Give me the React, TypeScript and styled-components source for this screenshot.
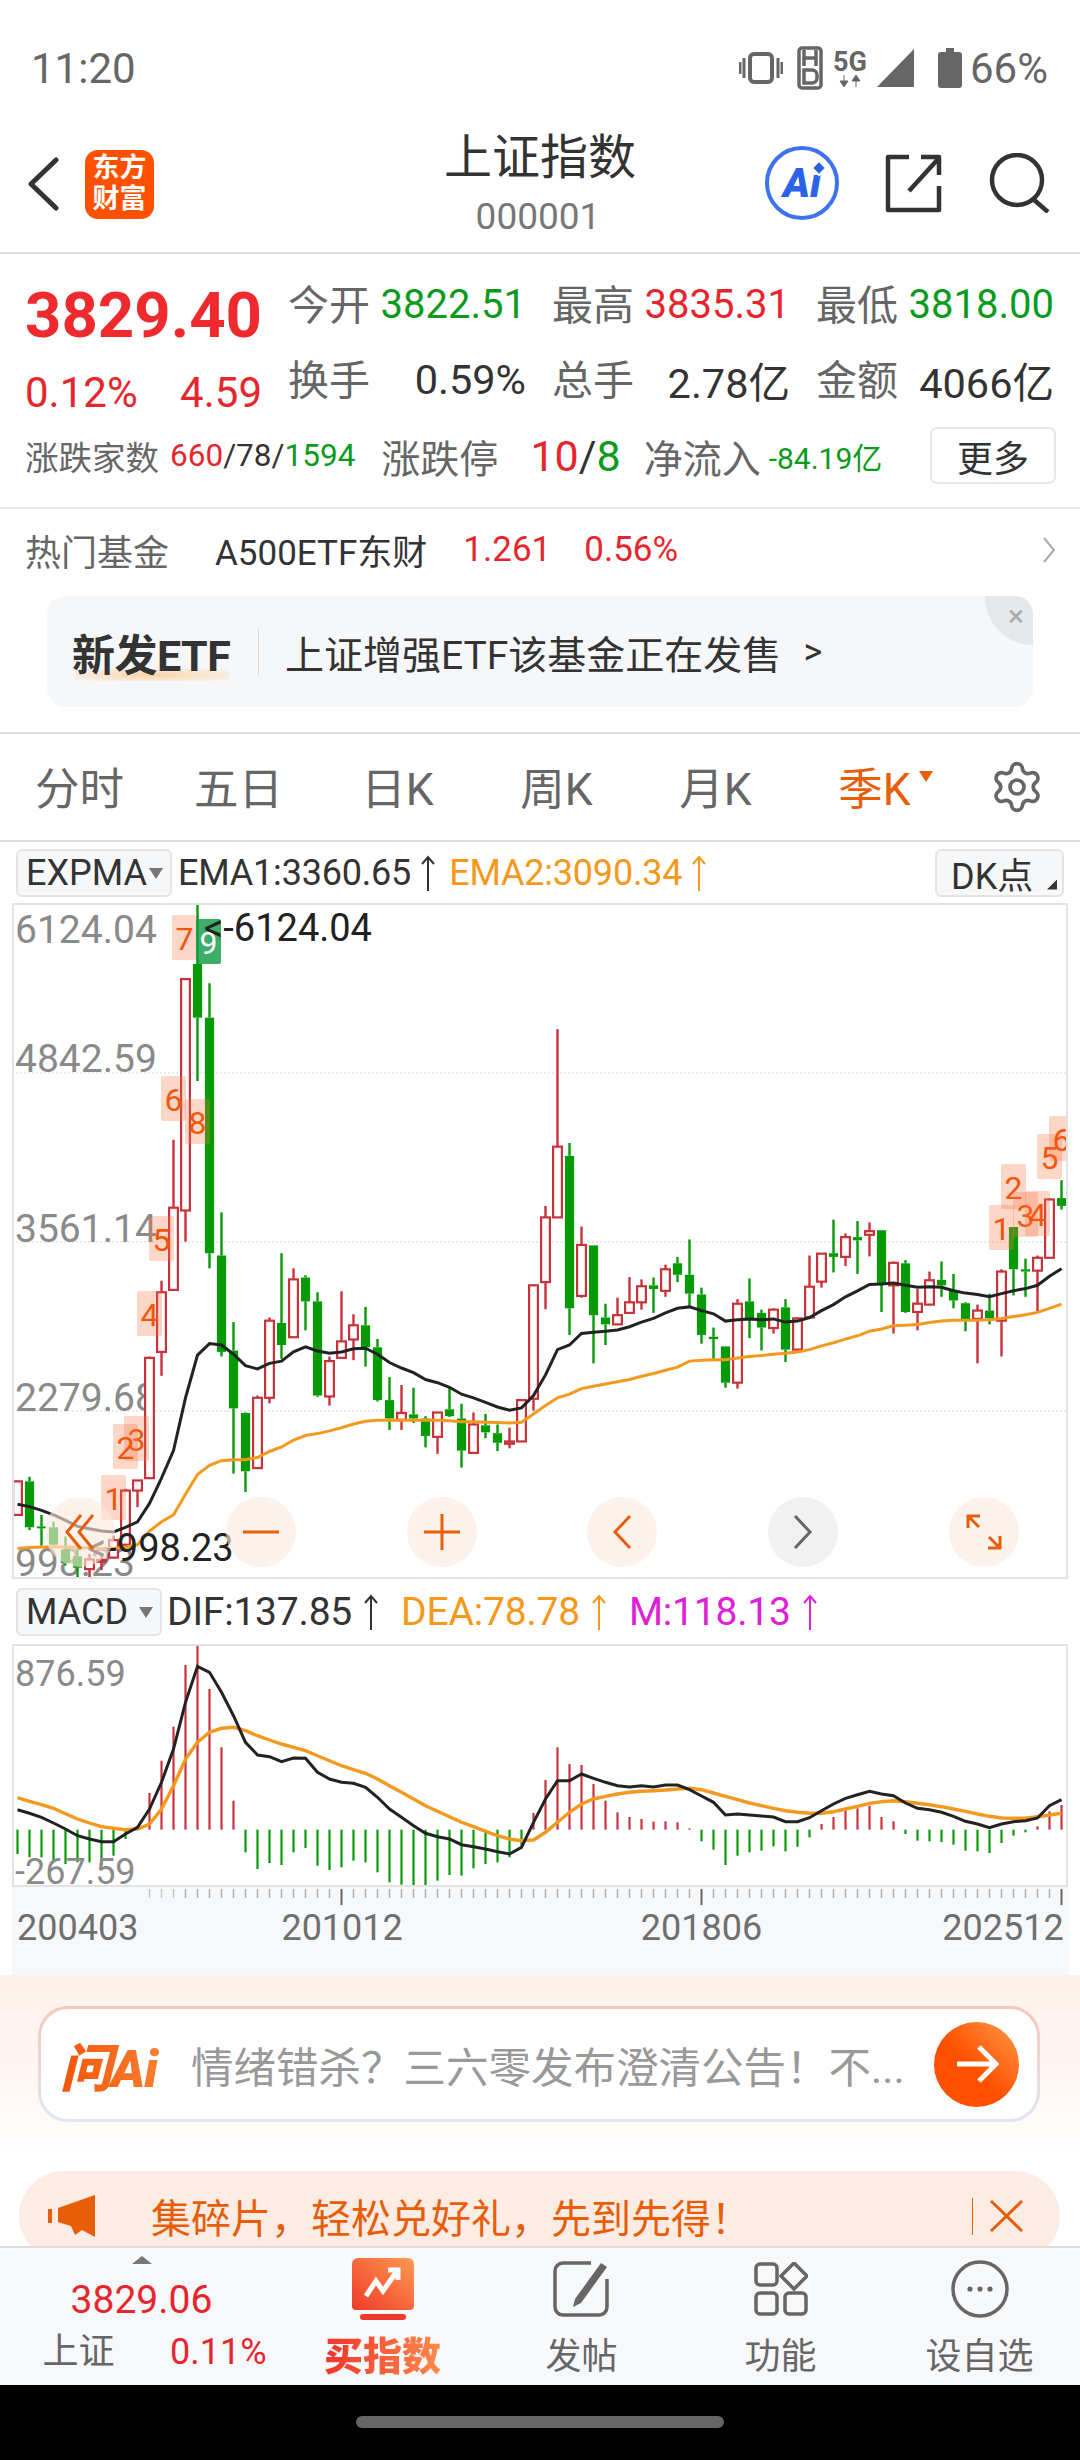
import React from 'react';
import styled, { createGlobalStyle } from 'styled-components';
import { Settings } from 'lucide-react';

const RED = '#e6262d';
const GREEN = '#0a9a1c';
const ORANGE = '#e85d08';
const AMBER = '#f5981c';

const GlobalStyle = createGlobalStyle`
  html, body {
    margin: 0;
    padding: 0;
    background: #fff;
    font-family: Roboto, "Noto Sans CJK SC", sans-serif;
  }
`;

const Page = styled.div`
  width: 1080px;
  height: 2460px;
  overflow: hidden;
  display: flex;
  flex-direction: column;
  color: #333;
`;

/* status bar */
const StatusBar = styled.div`
  height: 120px;
  box-sizing: border-box;
  padding: 16px 32px 0 31px;
  display: flex;
  align-items: center;
  justify-content: space-between;
  color: #666;
  font-size: 42px;
`;

const StatusIcons = styled.div`
  display: flex;
  align-items: center;
  gap: 8px;
`;

const NetStack = styled.div`
  display: flex;
  flex-direction: column;
  align-items: center;
  font-size: 27px;
  font-weight: 700;
  line-height: 26px;
  margin: 0 2px 0 2px;
`;

/* title */
const Header = styled.div`
  height: 134px;
  box-sizing: border-box;
  display: grid;
  grid-template-columns: 1fr auto 1fr;
  align-items: center;
  border-bottom: 2px solid #ddd;
`;

const HeaderLeft = styled.div`
  display: flex;
  align-items: center;
  gap: 26px;
  padding: 0 0 4px 27px;
`;

const Logo = styled.div`
  width: 69px;
  height: 69px;
  border-radius: 13px;
  background: #ff5000;
  color: #fff;
  font-size: 27px;
  font-weight: 700;
  line-height: 31px;
  text-align: center;
  display: flex;
  align-items: center;
  justify-content: center;
`;

const TitleBlock = styled.div`
  text-align: center;
`;

const Title = styled.div`
  font-size: 48px;
  line-height: 62px;
  color: #333;
  margin-top: -6px;
`;

const Code = styled.div`
  font-size: 37px;
  line-height: 44px;
  color: #777;
  margin: 6px 4px 0 0;
`;

const HeaderRight = styled.div`
  display: flex;
  align-items: center;
  justify-content: flex-end;
  gap: 46px;
  padding: 0 30px 6px 0;
`;

const AiBadge = styled.div`
  width: 74px;
  height: 74px;
  box-sizing: border-box;
  border: 4px solid #3f72f0;
  border-radius: 50%;
  display: flex;
  align-items: center;
  justify-content: center;
  color: #2a62ea;
  font-size: 41px;
  font-weight: 900;
  font-style: italic;
  font-family: Roboto, sans-serif;
  position: relative;
  &::after {
    content: '';
    position: absolute;
    left: 46px;
    top: 14px;
    width: 8px;
    height: 8px;
    background: #2a62ea;
    transform: rotate(45deg);
    box-shadow: 0 0 0 2px #fff;
  }
`;

/* quote */
const Quote = styled.div`
  height: 255px;
  box-sizing: border-box;
  padding-top: 13px;
  border-bottom: 2px solid #e9e9e9;
`;

const QuoteTop = styled.div`
  display: flex;
  height: 150px;
`;

const PriceCol = styled.div`
  width: 289px;
  box-sizing: border-box;
  padding: 17px 0 0 25px;
`;

const Price = styled.div`
  font-size: 63.5px;
  line-height: 64px;
  font-weight: 700;
  color: #ee2a2e;
`;

const PriceSub = styled.div`
  display: flex;
  justify-content: space-between;
  width: 237px;
  font-size: 42px;
  line-height: 50px;
  margin-top: 20px;
  color: ${RED};
`;

const StatGrid = styled.div`
  flex: 1;
  display: grid;
  grid-template-columns: repeat(3, 264px);
  grid-auto-rows: 75px;
`;

const Stat = styled.div`
  box-sizing: border-box;
  padding-right: 26px;
  display: flex;
  align-items: center;
  justify-content: space-between;
`;

const StatLabel = styled.span`
  font-size: 41px;
  color: #666;
  margin-bottom: 5px;
`;

const StatValue = styled.span<{ $color?: string; $size: number }>`
  font-size: ${({ $size }) => $size}px;
  color: ${({ $color }) => $color || '#333'};
`;

const BreadthRow = styled.div`
  display: flex;
  align-items: center;
  height: 57px;
  margin-top: 10px;
  padding-left: 25px;
  position: relative;
`;

const BreadthLabel = styled.span<{ $size: number; $ml?: number }>`
  font-size: ${({ $size }) => $size}px;
  color: #666;
  margin-left: ${({ $ml }) => $ml || 0}px;
  white-space: nowrap;
`;

const BreadthValue = styled.span<{ $size: number; $ml?: number }>`
  font-size: ${({ $size }) => $size}px;
  margin-left: ${({ $ml }) => $ml || 0}px;
  color: #333;
  white-space: nowrap;
`;

const Tint = styled.span<{ $color: string }>`
  color: ${({ $color }) => $color};
`;

const MoreButton = styled.div`
  position: absolute;
  left: 930px;
  top: 0;
  width: 126px;
  height: 57px;
  box-sizing: border-box;
  border: 2px solid #e8e8e8;
  border-radius: 7px;
  display: flex;
  align-items: center;
  justify-content: center;
  font-size: 36px;
  color: #333;
`;

/* fund */
const FundRow = styled.div`
  height: 87px;
  box-sizing: border-box;
  display: flex;
  align-items: center;
  padding: 0 24px 6px 25px;
  font-size: 35px;
  white-space: nowrap;
`;

const FundLabel = styled.span`
  font-size: 36px;
  color: #666;
`;

const FundName = styled.span`
  margin-left: 46px;
  color: #333;
`;

const FundNum = styled.span<{ $ml: number }>`
  margin-left: ${({ $ml }) => $ml}px;
  color: ${RED};
`;

const FundArrow = styled.svg`
  margin-left: auto;
`;

const EtfCard = styled.div`
  margin: 0 47px;
  height: 111px;
  border-radius: 18px;
  background: #f6f7f9;
  display: flex;
  align-items: center;
  padding-left: 25px;
  position: relative;
  overflow: hidden;
  white-space: nowrap;
`;

const EtfClose = styled.div`
  position: absolute;
  right: 0;
  top: 0;
  width: 48px;
  height: 49px;
  background: #e6e7e9;
  border-bottom-left-radius: 48px;
  color: #aaa;
  font-size: 30px;
  line-height: 40px;
  text-align: right;
  padding-right: 9px;
  box-sizing: border-box;
`;

const EtfTag = styled.div`
  font-size: 43px;
  font-weight: 700;
  color: #333;
  letter-spacing: -0.5px;
  position: relative;
  width: 186px;
  z-index: 0;
  &::after {
    content: '';
    position: absolute;
    left: 2px;
    bottom: 2px;
    width: 155px;
    height: 12px;
    background: radial-gradient(ellipse at center, #fbd3a4, rgba(251, 211, 164, 0));
    z-index: -1;
  }
`;

const EtfDivider = styled.div`
  width: 1px;
  height: 48px;
  background: #ddd;
`;

const EtfText = styled.div`
  margin-left: 26px;
  font-size: 39px;
  color: #333;
`;

const EtfChevron = styled.span`
  margin-left: 22px;
  font-size: 36px;
  color: #333;
`;

/* period tabs */
const Tabs = styled.div`
  margin-top: 25px;
  height: 106px;
  box-sizing: content-box;
  padding: 0;
  border-top: 2px solid #ddd;
  border-bottom: 2px solid #ddd;
  display: flex;
  align-items: center;
`;

const Tab = styled.div<{ $active?: boolean }>`
  width: 159px;
  margin-top: -4px;
  display: flex;
  justify-content: center;
  font-size: 44.5px;
  color: ${({ $active }) => ($active ? ORANGE : '#666')};
  position: relative;
`;

const TabCaret = styled.span`
  position: absolute;
  left: 124px;
  top: 18px;
  width: 0;
  height: 0;
  border-left: 7px solid transparent;
  border-right: 7px solid transparent;
  border-top: 11px solid ${ORANGE};
`;

const Gear = styled.div`
  margin-left: 35px;
  display: flex;
  color: #666;
`;

/* indicator rows */
const IndicatorRow = styled.div<{ $h: number }>`
  height: ${({ $h }) => $h}px;
  box-sizing: border-box;
  display: flex;
  align-items: center;
  padding: 0 16px;
  white-space: nowrap;
`;

const SelectBox = styled.div<{ $w: number }>`
  width: ${({ $w }) => $w}px;
  height: 48px;
  box-sizing: border-box;
  background: #f6f7f9;
  border: 2px solid #e4e4e4;
  border-radius: 6px;
  display: flex;
  align-items: center;
  padding-left: 8px;
  font-size: 36px;
  color: #333;
  position: relative;
`;

const SelectCaret = styled.span`
  position: absolute;
  right: 7px;
  top: 17px;
  width: 0;
  height: 0;
  border-left: 7px solid transparent;
  border-right: 7px solid transparent;
  border-top: 11px solid #777;
`;

const IndicatorText = styled.span<{ $color?: string; $ml: number; $size: number; $gap: number }>`
  margin-left: ${({ $ml }) => $ml}px;
  font-size: ${({ $size }) => $size}px;
  color: ${({ $color }) => $color || '#333'};
  letter-spacing: -0.2px;
  display: flex;
  align-items: center;
  gap: ${({ $gap }) => $gap}px;
`;

const DkButton = styled.div`
  margin-left: auto;
  margin-right: 0;
  width: 129px;
  height: 48px;
  box-sizing: border-box;
  background: #f6f7f9;
  border: 2px solid #e4e4e4;
  border-radius: 6px;
  font-size: 36px;
  color: #333;
  padding-left: 14px;
  display: flex;
  align-items: center;
  position: relative;
  &::after {
    content: '';
    position: absolute;
    right: 5px;
    bottom: 5px;
    width: 10px;
    height: 10px;
    background: #333;
    clip-path: polygon(100% 0, 100% 100%, 0 100%);
  }
`;

/* chart panels */
const ChartPanel = styled.div`
  margin-left: 12px;
  width: 1056px;
  height: 676px;
  box-sizing: border-box;
  position: relative;
  border: 2px solid #e2e2e2;
  overflow: hidden;
`;

const MacdPanel = styled.div`
  margin-left: 12px;
  width: 1056px;
  height: 243px;
  box-sizing: border-box;
  border: 2px solid #e2e2e2;
  overflow: hidden;
`;

const ChartSvg = styled.svg`
  display: block;
  position: absolute;
  left: -2px;
  top: -2px;
  font-family: Roboto, sans-serif;
`;

const MacdSvg = styled.svg`
  display: block;
  margin: -2px 0 0 -2px;
  font-family: Roboto, sans-serif;
`;

const ChartControls = styled.div`
  position: absolute;
  left: 31px;
  top: 592px;
  width: 974px;
  display: flex;
  justify-content: space-between;
`;

const ControlButton = styled.div<{ $muted?: boolean }>`
  width: 70px;
  height: 70px;
  border-radius: 50%;
  background: ${({ $muted }) => ($muted ? 'rgba(235,235,235,0.7)' : 'rgba(252,232,222,0.62)')};
  display: flex;
  align-items: center;
  justify-content: center;
`;

const TimeAxis = styled.div`
  margin-left: 12px;
  width: 1057px;
  height: 88px;
  background: #f7f8fa;
`;

const TimeLabels = styled.div`
  display: flex;
  font-size: 36px;
  color: #6f6f6f;
  line-height: 42px;
  margin-top: 2px;
`;

const TimeLabel = styled.span<{ $ml: number }>`
  margin-left: ${({ $ml }) => $ml}px;
`;

/* ask ai */
const AskSection = styled.div`
  height: 196px;
  box-sizing: border-box;
  padding: 31px 40px 0 38px;
  background: linear-gradient(#fff2ed, #fff5f1 50%, #fff 92%);
`;

const AskBox = styled.div`
  height: 116px;
  box-sizing: border-box;
  border: 3px solid transparent;
  border-radius: 30px;
  background: linear-gradient(#fff, #fff) padding-box, linear-gradient(#f8c6bd, #dfe6f4) border-box;
  display: flex;
  align-items: center;
  padding-left: 19px;
  white-space: nowrap;
`;

const AskLogo = styled.span`
  font-size: 52px;
  font-weight: 900;
  font-style: italic;
  width: 131px;
  letter-spacing: -1px;
  background: linear-gradient(90deg, #f0560a, #ff8a3c);
  -webkit-background-clip: text;
  background-clip: text;
  color: transparent;
`;

const AskText = styled.span`
  font-size: 42.5px;
  color: #999;
  width: 714px;
  overflow: hidden;
`;

const AskGo = styled.div`
  margin-left: 29px;
  width: 85px;
  height: 85px;
  border-radius: 50%;
  background: linear-gradient(45deg, #ff5000 45%, #ff9a4a);
  display: flex;
  align-items: center;
  justify-content: center;
`;

/* notice */
const NoticeClip = styled.div`
  height: 75px;
  overflow: hidden;
  padding: 0 20px 0 19px;
`;

const Notice = styled.div`
  height: 90px;
  border-radius: 45px;
  background: #fdece4;
  display: flex;
  align-items: center;
  padding-left: 29px;
  color: ${ORANGE};
  white-space: nowrap;
`;

const NoticeText = styled.span`
  margin-left: 56px;
  font-size: 40px;
`;

const NoticeDivider = styled.div`
  margin-left: 221px;
  width: 1px;
  height: 37px;
  background: ${ORANGE};
`;

const NoticeClose = styled.svg`
  margin-left: 17px;
`;

/* bottom tab bar */
const TabBar = styled.div`
  height: 139px;
  box-sizing: border-box;
  border-top: 2px solid #ddd;
  background: #f7f8fa;
  display: grid;
  grid-template-columns: 283px repeat(4, 199px);
`;

const IndexCell = styled.div`
  display: flex;
  flex-direction: column;
  align-items: center;
  padding-top: 8px;
`;

const IndexCaret = styled.span`
  width: 0;
  height: 0;
  border-left: 10px solid transparent;
  border-right: 10px solid transparent;
  border-bottom: 8px solid #777;
`;

const IndexPrice = styled.div`
  font-size: 39px;
  line-height: 46px;
  margin-top: 13px;
  color: ${RED};
`;

const IndexMeta = styled.div`
  width: 224px;
  margin: 6px 0 0 26px;
  display: flex;
  justify-content: space-between;
  align-items: center;
  font-size: 36px;
  line-height: 46px;
  color: #666;
`;

const IndexPct = styled.span`
  color: ${RED};
`;

const NavCell = styled.div`
  display: flex;
  flex-direction: column;
  align-items: center;
  padding-top: 10px;
`;

const NavIcon = styled.div`
  height: 62px;
  display: flex;
  align-items: center;
  justify-content: center;
`;

const NavLabel = styled.div<{ $hot?: boolean }>`
  font-size: ${({ $hot }) => ($hot ? 39 : 36)}px;
  font-weight: ${({ $hot }) => ($hot ? 900 : 400)};
  line-height: 48px;
  margin-top: 13px;
  color: #666;
  ${({ $hot }) =>
    $hot &&
    `
    background: linear-gradient(90deg, #f0352c, #ff8a4a);
    -webkit-background-clip: text;
    background-clip: text;
    color: transparent;
  `}
`;

const SystemBar = styled.div`
  flex: 1;
  background: #000;
  display: flex;
  justify-content: center;
  padding-top: 31px;
`;

const HomePill = styled.div`
  width: 368px;
  height: 12px;
  border-radius: 6px;
  background: #666;
`;

// [high, bodyTop, bodyBottom, low, up] measured off the reference, chart coordinates below convert them
type Candle = [number, number, number, number, 'r' | 'g'];

const CANDLES: Candle[] = [
  [1310, 1312, 1385, 1385, 'r'], [1302, 1312, 1412, 1418, 'g'], [1385, 1410, 1414, 1452, 'g'], [1400, 1412, 1450, 1452, 'g'],
  [1432, 1460, 1490, 1495, 'g'], [1450, 1475, 1500, 1525, 'g'], [1470, 1482, 1503, 1523, 'r'], [1475, 1483, 1487, 1505, 'r'],
  [1430, 1440, 1478, 1480, 'r'], [1328, 1332, 1450, 1455, 'r'], [1310, 1310, 1332, 1368, 'r'], [1040, 1043, 1305, 1307, 'r'],
  [875, 900, 1030, 1082, 'r'], [568, 716, 895, 895, 'r'], [218, 218, 722, 790, 'r'], [55, 185, 302, 440, 'g'],
  [227, 302, 815, 848, 'g'], [726, 820, 1030, 1040, 'g'], [965, 1027, 1153, 1295, 'g'], [1162, 1163, 1290, 1335, 'g'],
  [1125, 1130, 1283, 1283, 'r'], [955, 962, 1130, 1142, 'r'], [815, 967, 1015, 1045, 'g'], [848, 872, 998, 998, 'r'],
  [863, 868, 920, 983, 'g'], [900, 920, 1125, 1128, 'g'], [1040, 1050, 1127, 1147, 'r'], [898, 1007, 1043, 1043, 'r'],
  [948, 972, 1003, 1048, 'r'], [932, 972, 1020, 1062, 'g'], [1002, 1020, 1135, 1138, 'g'], [1085, 1135, 1175, 1200, 'g'],
  [1102, 1163, 1178, 1200, 'r'], [1108, 1166, 1175, 1185, 'g'], [1170, 1175, 1213, 1238, 'g'], [1162, 1162, 1215, 1252, 'r'],
  [1108, 1155, 1170, 1172, 'g'], [1143, 1175, 1245, 1282, 'g'], [1162, 1188, 1250, 1252, 'r'], [1165, 1190, 1205, 1218, 'g'],
  [1188, 1207, 1228, 1246, 'g'], [1195, 1225, 1230, 1240, 'r'], [1133, 1135, 1225, 1225, 'r'], [883, 885, 1132, 1158, 'r'],
  [712, 737, 878, 937, 'r'], [327, 583, 737, 737, 'r'], [575, 603, 935, 993, 'g'], [757, 797, 908, 912, 'r'],
  [798, 798, 950, 1055, 'g'], [925, 955, 970, 1015, 'g'], [912, 950, 970, 970, 'r'], [867, 922, 945, 945, 'r'],
  [872, 887, 922, 938, 'r'], [868, 885, 893, 945, 'g'], [840, 850, 897, 910, 'r'], [823, 837, 862, 878, 'g'],
  [785, 862, 903, 932, 'g'], [890, 905, 993, 1012, 'g'], [977, 997, 1002, 1050, 'g'], [1018, 1018, 1097, 1108, 'g'],
  [915, 925, 1097, 1110, 'r'], [870, 920, 957, 1000, 'g'], [938, 945, 977, 1027, 'g'], [935, 938, 978, 990, 'r'],
  [915, 933, 1025, 1052, 'g'], [955, 957, 1025, 1025, 'r'], [820, 888, 955, 955, 'r'], [815, 816, 877, 890, 'r'],
  [742, 815, 823, 857, 'g'], [772, 780, 823, 843, 'r'], [745, 780, 787, 860, 'g'], [748, 767, 775, 822, 'r'],
  [765, 765, 880, 943, 'g'], [833, 836, 885, 990, 'r'], [830, 837, 943, 945, 'g'], [893, 925, 943, 983, 'r'],
  [855, 874, 927, 928, 'r'], [833, 873, 885, 910, 'g'], [860, 895, 918, 935, 'g'], [922, 924, 960, 985, 'g'],
  [927, 940, 958, 1055, 'r'], [903, 940, 957, 970, 'g'], [850, 855, 962, 1040, 'r'], [758, 758, 850, 907, 'g'],
  [827, 850, 855, 910, 'g'], [820, 825, 853, 942, 'r'], [695, 698, 825, 825, 'r'], [656, 695, 712, 720, 'g'],
];

const EMA1 = [
  1362, 1367, 1375, 1385, 1397, 1410, 1415, 1420, 1422, 1412, 1400, 1360, 1305, 1245, 1130, 1037, 1012, 1015, 1035, 1060, 1067, 1055,
  1050, 1030, 1019, 1028, 1033, 1030, 1023, 1022, 1035, 1053, 1065, 1075, 1090, 1097, 1107, 1122, 1130, 1140, 1150, 1157, 1152, 1125,
  1080, 1025, 1015, 990, 987, 985, 982, 975, 965, 957, 945, 935, 932, 940, 947, 963, 960, 958, 960, 958, 965, 963, 955, 940, 927, 910,
  897, 883, 882, 880, 885, 889, 888, 889, 897, 902, 905, 910, 903, 897, 892, 885, 865, 849,
];

const EMA2 = [
  1458, 1456, 1455, 1455, 1455, 1456, 1457, 1458, 1458, 1455, 1450, 1420, 1400, 1385, 1340, 1297, 1277, 1267, 1265, 1265, 1260, 1247,
  1237, 1222, 1212, 1208, 1202, 1195, 1187, 1181, 1179, 1179, 1179, 1179, 1179, 1179, 1180, 1182, 1182, 1183, 1184, 1185, 1183, 1165,
  1147, 1130, 1122, 1110, 1105, 1100, 1095, 1090, 1083, 1077, 1070, 1063, 1050, 1048, 1047, 1047, 1043, 1040, 1038, 1035, 1033, 1030,
  1025, 1017, 1010, 1002, 995, 985, 980, 973, 972, 970, 966, 963, 961, 961, 961, 960, 957, 953, 949, 944, 935, 926,
];

const MARKERS: { x: number; y: number; t: string; green?: boolean }[] = [
  { x: 172, y: 916, t: '7' }, { x: 196, y: 920, t: '9', green: true }, { x: 161, y: 1077, t: '6' }, { x: 185, y: 1100, t: '8' },
  { x: 149, y: 1217, t: '5' }, { x: 137, y: 1292, t: '4' }, { x: 124, y: 1417, t: '3' }, { x: 113, y: 1425, t: '2' },
  { x: 101, y: 1476, t: '1' }, { x: 989, y: 1206, t: '1' }, { x: 1001, y: 1165, t: '2' }, { x: 1013, y: 1193, t: '3' },
  { x: 1025, y: 1192, t: '4' }, { x: 1037, y: 1135, t: '5' }, { x: 1049, y: 1117, t: '6' },
];

const AXIS_LABELS = [
  { t: '6124.04', y: 944 }, { t: '4842.59', y: 1073 }, { t: '3561.14', y: 1243 }, { t: '2279.68', y: 1412 }, { t: '998.23', y: 1577 },
];

const MACD_BARS = [
  825, 835, 835, 850, 855, 850, 850, 860, 830, 780, 752, 642, 545, 443, 258, 195, 330, 505, 665, 820, 870, 852, 858, 820, 807, 860, 873,
  865, 845, 850, 880, 910, 917, 920, 925, 905, 888, 890, 868, 855, 850, 835, 800, 702, 603, 505, 555, 558, 615, 665, 700, 714, 720, 728,
  727, 730, 748, 787, 812, 858, 830, 820, 815, 802, 817, 803, 775, 735, 714, 692, 688, 680, 714, 727, 765, 785, 787, 789, 797, 815, 817,
  822, 792, 770, 760, 742, 697, 678,
];

const DIF_LINE = [
  692, 703, 715, 732, 750, 770, 780, 788, 788, 765, 745, 690, 610, 510, 370, 262, 280, 340, 410, 490, 528, 533, 548, 537, 538, 580, 600, 610,
  613, 625, 655, 690, 715, 740, 763, 773, 780, 797, 803, 810, 818, 825, 805, 730, 660, 605, 605, 585, 598, 610, 620, 624, 620, 624, 618,
  618, 632, 651, 670, 708, 705, 708, 711, 714, 728, 728, 716, 695, 675, 658, 647, 637, 645, 650, 672, 688, 692, 700, 712, 727, 735, 746,
  735, 728, 725, 717, 680, 662,
];

const DEA_LINE = [
  656, 667, 677, 688, 704, 720, 732, 743, 748, 752, 750, 735, 690, 620, 540, 490, 460, 448, 445, 455, 470, 483, 495, 505, 515, 530, 545, 560,
  572, 583, 600, 620, 640, 660, 680, 697, 713, 730, 743, 757, 770, 780, 785, 783, 760, 730, 700, 675, 660, 652, 645, 640, 637, 635, 633,
  630, 628, 632, 642, 652, 662, 672, 680, 688, 695, 700, 703, 703, 698, 690, 682, 673, 668, 665, 668, 673, 677, 683, 690, 697, 705, 712,
  717, 718, 718, 713, 708, 703,
];

const candleX = (i: number) => 5.5 + 12 * i;
const zoomY = (z: number) => 880 + z / 2.178 - 904;
const macdY = (z: number) => z / 3 - 65;
const linePoints = (values: number[], toY: (v: number) => number) =>
  values.map((v, i) => `${candleX(i).toFixed(1)},${toY(v).toFixed(1)}`).join(' ');

const KChart: React.FC = () => (
  <ChartSvg width={1056} height={676} viewBox="0 0 1056 676">
    {[1074, 1243, 1412].map(y => (
      <line key={y} x1={0} x2={1056} y1={y - 904} y2={y - 904} stroke="#e4e4e4" strokeWidth={1.5} strokeDasharray="2 2" />
    ))}
    {AXIS_LABELS.map(l => (
      <text key={l.t} x={3} y={l.y - 904} fontSize={39} fill="#8a8a8a">
        {l.t}
      </text>
    ))}
    {CANDLES.map(([hi, top, bot, lo, c], i) => {
      const x = candleX(i);
      const color = c === 'r' ? '#c8333b' : '#069a06';
      return (
        <g key={i}>
          <line x1={x} x2={x} y1={zoomY(hi)} y2={zoomY(top)} stroke={color} strokeWidth={2.4} />
          <line x1={x} x2={x} y1={zoomY(bot)} y2={zoomY(lo)} stroke={color} strokeWidth={2.4} />
          {c === 'r' ? (
            <rect x={x - 4.4} y={zoomY(top)} width={8.8} height={Math.max(zoomY(bot) - zoomY(top), 1)} fill="#fff" stroke={color} strokeWidth={2.2} />
          ) : (
            <rect x={x - 4.6} y={zoomY(top)} width={9.2} height={Math.max(zoomY(bot) - zoomY(top), 2)} fill={color} />
          )}
        </g>
      );
    })}
    <polyline points={linePoints(EMA2, zoomY)} fill="none" stroke="#f5991e" strokeWidth={3} />
    <polyline points={linePoints(EMA1, zoomY)} fill="none" stroke="#222" strokeWidth={3} />
    {MARKERS.map((m, i) => (
      <g key={i}>
        <rect x={m.x - 12} y={m.y - 904} width={25} height={45} rx={2} fill={m.green ? 'rgba(20,155,70,0.82)' : 'rgba(246,120,70,0.3)'} />
        <text x={m.x + 0.5} y={m.y - 904 + 35} fontSize={32} textAnchor="middle" fill={m.green ? '#fff' : '#f2570c'}>
          {m.t}
        </text>
      </g>
    ))}
    <text x={192} y={38} fontSize={38} fill="#222">
      {'<-6124.04'}
    </text>
    <text x={75} y={658} fontSize={38} fill="#222">
      {'<-998.23'}
    </text>
  </ChartSvg>
);

const MacdChart: React.FC = () => (
  <MacdSvg width={1056} height={243} viewBox="0 0 1056 243">
    {MACD_BARS.map((z, i) => {
      const x = candleX(i);
      const base = macdY(752);
      return <line key={i} x1={x} x2={x} y1={base} y2={macdY(z)} stroke={z < 752 ? '#c8333b' : '#069a06'} strokeWidth={2.2} />;
    })}
    <text x={3} y={42} fontSize={36} fill="#8a8a8a">
      876.59
    </text>
    <text x={3} y={240} fontSize={36} fill="#8a8a8a">
      -267.59
    </text>
    <polyline points={linePoints(DEA_LINE, macdY)} fill="none" stroke="#f5991e" strokeWidth={3.4} />
    <polyline points={linePoints(DIF_LINE, macdY)} fill="none" stroke="#222" strokeWidth={3} />
  </MacdSvg>
);

const UpArrow: React.FC<{ color: string }> = ({ color }) => (
  <svg width={16} height={36} viewBox="0 0 16 36">
    <path d="M8 36V2M2 9L8 2l6 7" fill="none" stroke={color} strokeWidth={2} />
  </svg>
);

const TimeTicks: React.FC = () => (
  <svg width={1057} height={18} viewBox="0 0 1057 18" style={{ display: 'block' }}>
    {Array.from({ length: 77 }, (_, n) => {
      const i = n + 11;
      const major = i === 27 || i === 57 || i === 87;
      return (
        <line key={i} x1={candleX(i)} x2={candleX(i)} y1={2} y2={major ? 18 : 11} stroke={major ? '#666' : '#aaa'} strokeWidth={major ? 2 : 1.4} opacity={i < 14 ? 0.6 : 1} />
      );
    })}
  </svg>
);

const App: React.FC = () => (
  <Page>
    <GlobalStyle />
    <StatusBar>
      <span>11:20</span>
      <StatusIcons>
        <svg width={44} height={32} viewBox="0 0 44 32">
          <rect x={11} y={2} width={22} height={28} rx={4} fill="none" stroke="#666" strokeWidth={4} />
          <path d="M5 6v20M1 10v12M39 6v20M43 10v12" stroke="#666" strokeWidth={3} />
        </svg>
        <svg width={26} height={44} viewBox="0 0 26 44" style={{ marginLeft: 6 }}>
          <rect x={2} y={2} width={22} height={40} rx={3} fill="none" stroke="#666" strokeWidth={3.5} />
          <path d="M7 4v16M19 4v16M7 12h12M7 24h8a5 5 0 0 1 5 5v3a5 5 0 0 1-5 5H7z" fill="none" stroke="#666" strokeWidth={3.5} />
        </svg>
        <NetStack>
          <span>5G</span>
          <svg width={24} height={12} viewBox="0 0 24 12">
            <path d="M6 0v7M2 6h8l-4 6zM18 12V5M14 6h8l-4-6z" fill="#666" stroke="#666" strokeWidth={1} />
          </svg>
        </NetStack>
        <svg width={37} height={38} viewBox="0 0 37 38">
          <path d="M37 0v38H0z" fill="#666" />
        </svg>
        <svg width={24} height={40} viewBox="0 0 24 40" style={{ marginLeft: 16 }}>
          <path d="M8 0h8v4h5a3 3 0 0 1 3 3v30a3 3 0 0 1-3 3H3a3 3 0 0 1-3-3V7a3 3 0 0 1 3-3h5z" fill="#666" />
        </svg>
        <span>66%</span>
      </StatusIcons>
    </StatusBar>

    <Header>
      <HeaderLeft>
        <svg width={32} height={54} viewBox="0 0 32 54">
          <path d="M29 3L4 27l25 24" fill="none" stroke="#333" strokeWidth={5} strokeLinecap="round" strokeLinejoin="round" />
        </svg>
        <Logo>
          东方
          <br />
          财富
        </Logo>
      </HeaderLeft>
      <TitleBlock>
        <Title>上证指数</Title>
        <Code>000001</Code>
      </TitleBlock>
      <HeaderRight>
        <AiBadge>Ai</AiBadge>
        <svg width={57} height={59} viewBox="0 0 57 59">
          <path d="M24 3H3v53h51V32M24 37L54 4M36 3h18v18" fill="none" stroke="#333" strokeWidth={4.5} strokeLinejoin="round" />
        </svg>
        <svg width={62} height={60} viewBox="0 0 62 60">
          <circle cx={29} cy={27} r={25} fill="none" stroke="#333" strokeWidth={4.5} />
          <path d="M45 46l15 13" stroke="#333" strokeWidth={4.5} />
        </svg>
      </HeaderRight>
    </Header>

    <Quote>
      <QuoteTop>
        <PriceCol>
          <Price>3829.40</Price>
          <PriceSub>
            <span>0.12%</span>
            <span>4.59</span>
          </PriceSub>
        </PriceCol>
        <StatGrid>
          <Stat>
            <StatLabel>今开</StatLabel>
            <StatValue $size={40} $color={GREEN}>3822.51</StatValue>
          </Stat>
          <Stat>
            <StatLabel>最高</StatLabel>
            <StatValue $size={40} $color={RED}>3835.31</StatValue>
          </Stat>
          <Stat>
            <StatLabel>最低</StatLabel>
            <StatValue $size={40} $color={GREEN}>3818.00</StatValue>
          </Stat>
          <Stat>
            <StatLabel>换手</StatLabel>
            <StatValue $size={41.5}>0.59%</StatValue>
          </Stat>
          <Stat>
            <StatLabel>总手</StatLabel>
            <StatValue $size={41.5}>2.78亿</StatValue>
          </Stat>
          <Stat>
            <StatLabel>金额</StatLabel>
            <StatValue $size={41.5}>4066亿</StatValue>
          </Stat>
        </StatGrid>
      </QuoteTop>
      <BreadthRow>
        <BreadthLabel $size={33.5}>涨跌家数</BreadthLabel>
        <BreadthValue $size={31.5} $ml={11}>
          <Tint $color={RED}>660</Tint>/78/<Tint $color={GREEN}>1594</Tint>
        </BreadthValue>
        <BreadthLabel $size={39} $ml={26}>
          涨跌停
        </BreadthLabel>
        <BreadthValue $size={43} $ml={32}>
          <Tint $color={RED}>10</Tint>/<Tint $color={GREEN}>8</Tint>
        </BreadthValue>
        <BreadthLabel $size={39} $ml={23}>
          净流入
        </BreadthLabel>
        <BreadthValue $size={30} $ml={8}>
          <Tint $color={GREEN}>-84.19亿</Tint>
        </BreadthValue>
        <MoreButton>更多</MoreButton>
      </BreadthRow>
    </Quote>

    <FundRow>
      <FundLabel>热门基金</FundLabel>
      <FundName>A500ETF东财</FundName>
      <FundNum $ml={36}>1.261</FundNum>
      <FundNum $ml={33}>0.56%</FundNum>
      <FundArrow width={14} height={26} viewBox="0 0 14 26">
        <path d="M2 1l10 12L2 25" fill="none" stroke="#aaa" strokeWidth={2} />
      </FundArrow>
    </FundRow>
    <EtfCard>
      <EtfTag>新发ETF</EtfTag>
      <EtfDivider />
      <EtfText>上证增强ETF该基金正在发售</EtfText>
      <EtfChevron>&gt;</EtfChevron>
      <EtfClose>×</EtfClose>
    </EtfCard>

    <Tabs>
      <Tab>分时</Tab>
      <Tab>五日</Tab>
      <Tab>日K</Tab>
      <Tab>周K</Tab>
      <Tab>月K</Tab>
      <Tab $active>
        季K
        <TabCaret />
      </Tab>
      <Gear>
        <Settings size={56} strokeWidth={1.6} />
      </Gear>
    </Tabs>

    <IndicatorRow $h={61}>
      <SelectBox $w={156}>
        EXPMA
        <SelectCaret />
      </SelectBox>
      <IndicatorText $ml={6} $size={36} $gap={9}>
        EMA1:3360.65
        <UpArrow color="#333" />
      </IndicatorText>
      <IndicatorText $ml={13} $size={36} $gap={9} $color={AMBER}>
        EMA2:3090.34
        <UpArrow color={AMBER} />
      </IndicatorText>
      <DkButton>DK点</DkButton>
    </IndicatorRow>

    <ChartPanel>
      <KChart />
      <ChartControls>
        <ControlButton>
          <svg width={30} height={38} viewBox="0 0 30 38">
            <path d="M16 2L2 19l14 17M28 2L14 19l14 17" fill="none" stroke={ORANGE} strokeWidth={3} />
          </svg>
        </ControlButton>
        <ControlButton>
          <svg width={36} height={4} viewBox="0 0 36 4">
            <path d="M0 2h36" stroke={ORANGE} strokeWidth={3} />
          </svg>
        </ControlButton>
        <ControlButton>
          <svg width={36} height={36} viewBox="0 0 36 36">
            <path d="M0 18h36M18 0v36" stroke={ORANGE} strokeWidth={3} />
          </svg>
        </ControlButton>
        <ControlButton>
          <svg width={20} height={36} viewBox="0 0 20 36">
            <path d="M18 2L3 18l15 16" fill="none" stroke={ORANGE} strokeWidth={3} />
          </svg>
        </ControlButton>
        <ControlButton $muted>
          <svg width={20} height={36} viewBox="0 0 20 36">
            <path d="M2 2l15 16L2 34" fill="none" stroke="#666" strokeWidth={3} />
          </svg>
        </ControlButton>
        <ControlButton>
          <svg width={36} height={36} viewBox="0 0 36 36">
            <path d="M2 14V2h12M2 2l11 11M34 22v12H22M34 34L23 23" fill="none" stroke={ORANGE} strokeWidth={3} />
          </svg>
        </ControlButton>
      </ChartControls>
    </ChartPanel>

    <IndicatorRow $h={65}>
      <SelectBox $w={146}>
        MACD
        <SelectCaret />
      </SelectBox>
      <IndicatorText $ml={5} $size={39} $gap={11}>
        DIF:137.85
        <UpArrow color="#333" />
      </IndicatorText>
      <IndicatorText $ml={22} $size={39} $gap={11} $color={AMBER}>
        DEA:78.78
        <UpArrow color={AMBER} />
      </IndicatorText>
      <IndicatorText $ml={22} $size={39} $gap={11} $color="#e020d8">
        M:118.13
        <UpArrow color="#e020d8" />
      </IndicatorText>
    </IndicatorRow>

    <MacdPanel>
      <MacdChart />
    </MacdPanel>

    <TimeAxis>
      <TimeTicks />
      <TimeLabels>
        <TimeLabel $ml={5}>200403</TimeLabel>
        <TimeLabel $ml={143}>201012</TimeLabel>
        <TimeLabel $ml={238}>201806</TimeLabel>
        <TimeLabel $ml={180}>202512</TimeLabel>
      </TimeLabels>
    </TimeAxis>

    <AskSection>
      <AskBox>
        <AskLogo>问Ai</AskLogo>
        <AskText>情绪错杀？三六零发布澄清公告！不...</AskText>
        <AskGo>
          <svg width={44} height={40} viewBox="0 0 44 40">
            <path d="M2 20h38M24 3l17 17-17 17" fill="none" stroke="#fff" strokeWidth={5} />
          </svg>
        </AskGo>
      </AskBox>
    </AskSection>

    <NoticeClip>
      <Notice>
        <svg width={47} height={42} viewBox="0 0 47 42">
          <path d="M0 14h4v14H0zM10 13L47 0v42l-13-7-7 5-4-9-13-4z" fill={ORANGE} />
        </svg>
        <NoticeText>集碎片，轻松兑好礼，先到先得！</NoticeText>
        <NoticeDivider />
        <NoticeClose width={33} height={32} viewBox="0 0 33 32">
          <path d="M1 1l31 30M32 1L1 31" stroke={ORANGE} strokeWidth={3} />
        </NoticeClose>
      </Notice>
    </NoticeClip>

    <TabBar>
      <IndexCell>
        <IndexCaret />
        <IndexPrice>3829.06</IndexPrice>
        <IndexMeta>
          <span>上证</span>
          <IndexPct>0.11%</IndexPct>
        </IndexMeta>
      </IndexCell>
      <NavCell>
        <NavIcon>
          <svg width={62} height={62} viewBox="0 0 62 62">
            <defs>
              <linearGradient id="buyIdx" x1="0" y1="1" x2="1" y2="0">
                <stop offset="0" stopColor="#ee3a2a" />
                <stop offset="1" stopColor="#ff9a50" />
              </linearGradient>
            </defs>
            <path d="M6 0h50a6 6 0 0 1 6 6v42a4 4 0 0 1-4 4H4a4 4 0 0 1-4-4V6a6 6 0 0 1 6-6z" fill="url(#buyIdx)" />
            <path d="M14 38l10-15 7 10 14-20M36 12l10 0 0 10" fill="none" stroke="#fff" strokeWidth={5} />
            <rect x={8} y={56} width={46} height={6} rx={3} fill="#ee3a2a" />
          </svg>
        </NavIcon>
        <NavLabel $hot>买指数</NavLabel>
      </NavCell>
      <NavCell>
        <NavIcon>
          <svg width={57} height={56} viewBox="0 0 57 56">
            <path d="M38 2H10a8 8 0 0 0-8 8v36a8 8 0 0 0 8 8h36a8 8 0 0 0 8-8V18" fill="none" stroke="#666" strokeWidth={3.5} />
            <path d="M22 38L48 2l6 4-26 36-8 4z" fill="#666" />
          </svg>
        </NavIcon>
        <NavLabel>发帖</NavLabel>
      </NavCell>
      <NavCell>
        <NavIcon>
          <svg width={54} height={54} viewBox="0 0 54 54">
            <g fill="none" stroke="#666" strokeWidth={3.5}>
              <rect x={2} y={2} width={21} height={21} rx={4} />
              <path d="M40 1l13 13-13 13-13-13z" />
              <rect x={2} y={31} width={21} height={21} rx={4} />
              <rect x={31} y={31} width={21} height={21} rx={4} />
            </g>
          </svg>
        </NavIcon>
        <NavLabel>功能</NavLabel>
      </NavCell>
      <NavCell>
        <NavIcon>
          <svg width={58} height={58} viewBox="0 0 58 58">
            <circle cx={29} cy={29} r={27} fill="none" stroke="#666" strokeWidth={3.5} />
            <circle cx={19} cy={29} r={2.6} fill="#666" />
            <circle cx={29} cy={29} r={2.6} fill="#666" />
            <circle cx={39} cy={29} r={2.6} fill="#666" />
          </svg>
        </NavIcon>
        <NavLabel>设自选</NavLabel>
      </NavCell>
    </TabBar>

    <SystemBar>
      <HomePill />
    </SystemBar>
  </Page>
);

export default App;
